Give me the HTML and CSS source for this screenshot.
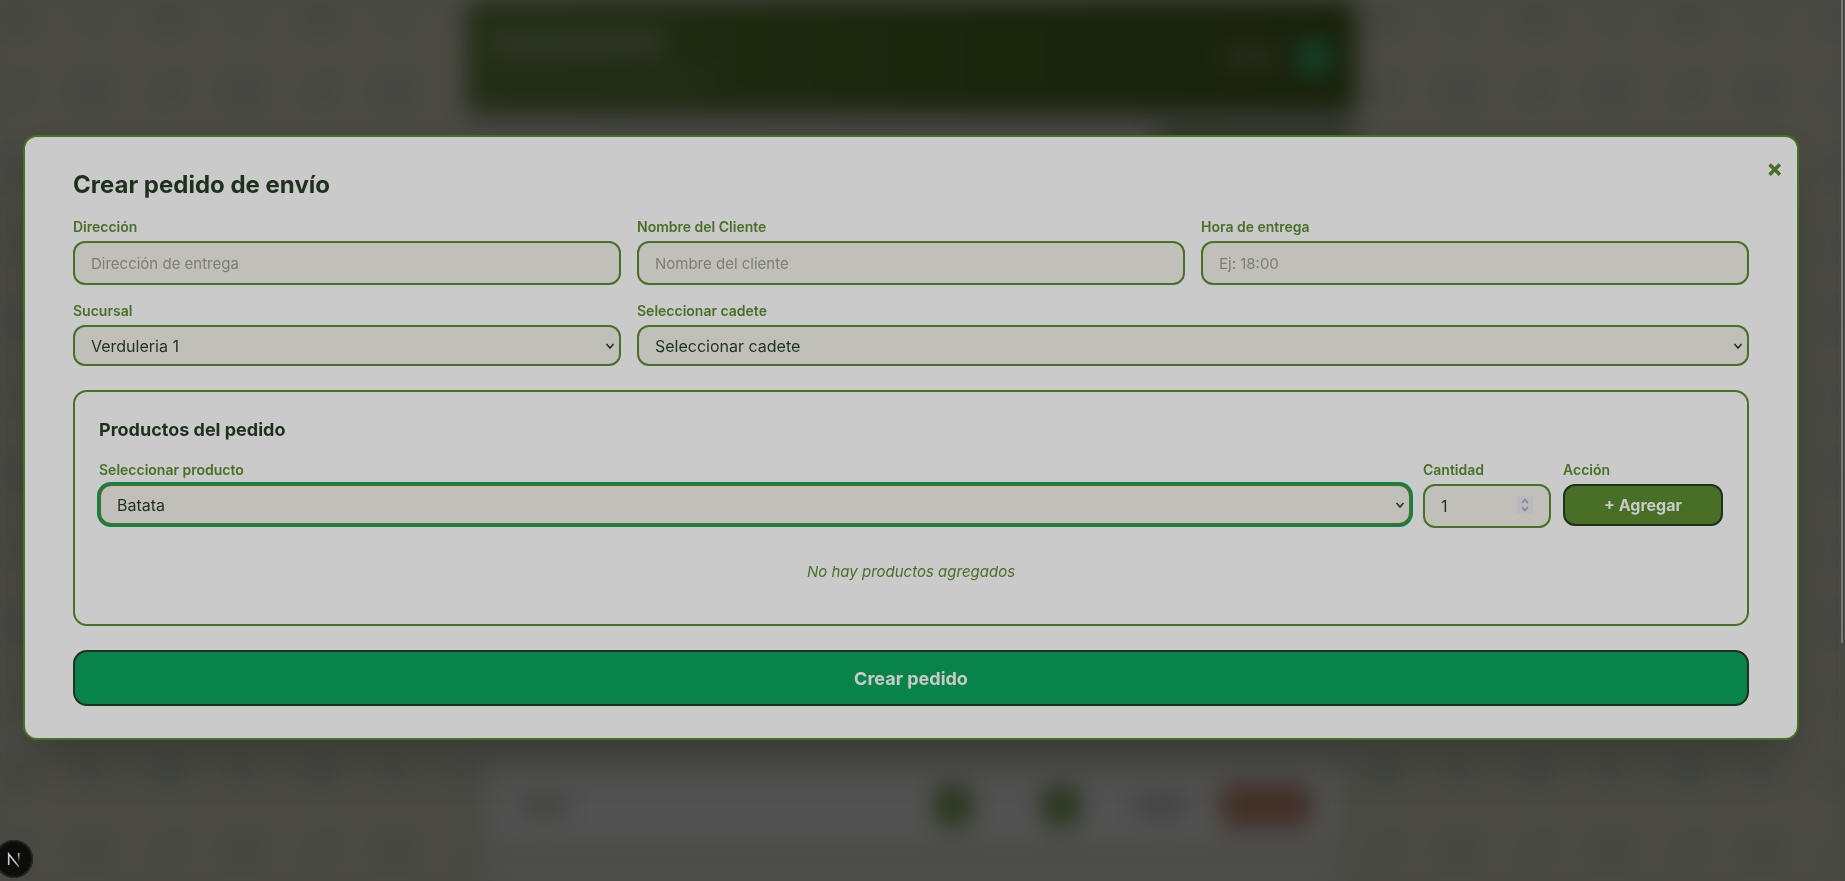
FILE: index.html
```html
<!DOCTYPE html>
<html lang="es">
<head>
<meta charset="utf-8">
<meta name="viewport" content="width=device-width, initial-scale=1">
<title>Crear pedido de envío</title>
<link rel="stylesheet" href="styles.css">
</head>
<body>
<div class="page" aria-hidden="true">
  <svg class="pattern" width="100%" height="100%">
    <defs>
      <pattern id="veggies" width="152" height="152" patternUnits="userSpaceOnUse">
        <g fill="#42453f">
          <circle cx="16" cy="16" r="18"/>
          <circle cx="91" cy="92" r="18"/>
          <ellipse cx="91" cy="15" rx="20" ry="8" transform="rotate(45 91 15)"/>
          <ellipse cx="17" cy="91" rx="20" ry="8" transform="rotate(-45 17 91)"/>
        </g>
      </pattern>
    </defs>
    <rect width="100%" height="100%" fill="url(#veggies)"/>
  </svg>
  <div class="column">
    <div class="hero">
      <div class="hero-copy">
        <div class="bar bar-title"></div>
        <div class="bar bar-sub"></div>
      </div>
      <div class="hero-user">
        <div class="bar bar-user"></div>
        <div class="avatar"></div>
      </div>
    </div>
    <div class="toolbar"><div class="tool"></div></div>
    <div class="rows">
      <div class="row">
        <div class="bar bar-name"></div>
        <div class="step"></div>
        <div class="step"></div>
        <div class="bar bar-price"></div>
        <div class="remove"></div>
      </div>
      <div class="row">
        <div class="bar bar-name"></div>
        <div class="step"></div>
        <div class="step"></div>
        <div class="bar bar-price"></div>
        <div class="remove"></div>
      </div>
    </div>
  </div>
</div>

<main class="overlay">
  <section class="modal" role="dialog" aria-modal="true" aria-labelledby="modal-title">
    <button class="close" type="button" aria-label="Cerrar">×</button>
    <h2 class="modal-title" id="modal-title">Crear pedido de envío</h2>
    <form class="form">
      <div class="fields">
        <div class="field">
          <label class="label" for="direccion">Dirección</label>
          <input class="control" id="direccion" type="text" placeholder="Dirección de entrega">
        </div>
        <div class="field">
          <label class="label" for="cliente">Nombre del Cliente</label>
          <input class="control" id="cliente" type="text" placeholder="Nombre del cliente">
        </div>
        <div class="field">
          <label class="label" for="hora">Hora de entrega</label>
          <input class="control" id="hora" type="text" placeholder="Ej: 18:00">
        </div>
        <div class="field">
          <label class="label" for="sucursal">Sucursal</label>
          <select class="control select" id="sucursal"><option>Verduleria 1</option></select>
        </div>
        <div class="field field-wide">
          <label class="label" for="cadete">Seleccionar cadete</label>
          <select class="control select" id="cadete"><option>Seleccionar cadete</option></select>
        </div>
      </div>

      <div class="products">
        <h3 class="products-title">Productos del pedido</h3>
        <div class="product-row">
          <div class="field">
            <label class="label" for="producto">Seleccionar producto</label>
            <select class="control select is-focused" id="producto"><option>Batata</option></select>
          </div>
          <div class="field">
            <label class="label" for="cantidad">Cantidad</label>
            <input class="control quantity" id="cantidad" type="number" min="1" value="1">
          </div>
          <div class="field">
            <label class="label" for="agregar">Acción</label>
            <button class="add" id="agregar" type="button">+ Agregar</button>
          </div>
        </div>
        <p class="empty">No hay productos agregados</p>
      </div>

      <button class="submit" type="submit">Crear pedido</button>
    </form>
  </section>
</main>

<div class="scroll-thumb"></div>
<button class="dev-badge" type="button" aria-label="Next.js">
  <svg width="38" height="38" viewBox="0 0 38 38" fill="none">
    <defs>
      <linearGradient id="fade-a" x1="14" y1="14" x2="26" y2="27" gradientUnits="userSpaceOnUse"><stop offset="0.6" stop-color="#ccc"/><stop offset="1" stop-color="#ccc" stop-opacity="0.3"/></linearGradient>
      <linearGradient id="fade-b" x1="0" y1="13" x2="0" y2="22" gradientUnits="userSpaceOnUse"><stop stop-color="#ccc"/><stop offset="1" stop-color="#ccc" stop-opacity="0"/></linearGradient>
    </defs>
    <path d="M13.7 25V14L24 27" stroke="url(#fade-a)" stroke-width="1.6"/>
    <path d="M23.7 13V22" stroke="url(#fade-b)" stroke-width="1.6"/>
  </svg>
</button>
</body>
</html>
```
FILE: styles.css
```css
:root {
  --green: #477026;
  --emerald: #08844a;
  --ink: #1e311d;
  --paper: #cacaca;
  --field: #c1bfb9;
}

* { box-sizing: border-box; }

body {
  margin: 0;
  background: #4a4a43;
  color: var(--ink);
  font: 16px/24px Inter, "Liberation Sans", sans-serif;
}

h2, h3, p { margin: 0; }

/* Dimmed page behind the dialog */
.page {
  position: fixed;
  inset: 0;
  overflow: hidden;
  background: #4a4a43;
  filter: blur(12px);
}

.pattern {
  position: absolute;
  inset: 0;
}

.column {
  position: relative;
  display: flex;
  flex-direction: column;
  width: 888px;
  height: 100%;
  margin-left: calc(50% - 455px);
  background: #4a4a45;
}

.hero {
  display: flex;
  align-items: center;
  justify-content: space-between;
  flex: none;
  height: 113px;
  padding: 0 24px;
  border-radius: 12px;
  background: linear-gradient(90deg, #212e14, #1b260d 60%, #19220c);
  box-shadow: 0 8px 16px #3e3e3a;
}

.hero-copy { display: grid; gap: 16px; }
.hero-user { display: flex; align-items: center; gap: 20px; }
.bar { border-radius: 4px; }
.bar-title { width: 174px; height: 26px; background: #303627; }
.bar-sub { width: 230px; height: 14px; background: #232f18; }
.bar-user { width: 54px; height: 20px; background: #292e1e; }
.avatar { width: 36px; height: 36px; border-radius: 50%; background: #14422c; }

.toolbar { display: flex; justify-content: flex-end; padding-top: 12px; }
.tool { width: 200px; height: 48px; background: #2d3728; }

.rows {
  display: grid;
  gap: 24px;
  margin-top: auto;
  padding: 0 24px;
  margin-bottom: -60px;
}

.row {
  display: flex;
  align-items: center;
  height: 74px;
  padding: 0 20px 0 28px;
  border-radius: 8px;
  background: #525252;
}

.bar-name { width: 48px; height: 20px; margin-right: auto; background: #41413f; }
.step { width: 38px; height: 40px; margin-right: 70px; border-radius: 8px; background: #27361a; }
.step + .step { margin-right: 56px; }
.bar-price { width: 52px; height: 20px; margin-right: 32px; background: #3f3f3e; }
.remove { width: 92px; height: 44px; border-radius: 8px; background: #412f26; }

/* Dialog */
.overlay {
  position: relative;
  display: flex;
  align-items: center;
  min-height: 100vh;
  padding: 0 46px 6px 23px;
}

.modal {
  position: relative;
  width: 100%;
  padding: 32px 48px;
  border: 2px solid var(--green);
  border-radius: 14px;
  background: var(--paper);
  box-shadow: 0 25px 50px -12px rgba(0, 0, 0, 0.25);
}

.modal-title {
  margin-bottom: 16px;
  font-size: 24px;
  line-height: 32px;
  font-weight: 700;
}

.close {
  position: absolute;
  top: 18px;
  right: 14px;
  padding: 0;
  border: 0;
  background: none;
  color: var(--green);
  font: 800 24px/28px Inter, sans-serif;
}

.form { display: grid; gap: 24px; }

.fields {
  display: grid;
  grid-template-columns: repeat(3, 1fr);
  gap: 16px;
}

.field {
  display: flex;
  flex-direction: column;
  gap: 4px;
  min-width: 0;
}

.field-wide { grid-column: span 2; }

.label {
  color: var(--green);
  font-size: 14px;
  line-height: 20px;
  font-weight: 600;
}

.control {
  width: 100%;
  height: 44px;
  padding: 8px 16px;
  border: 2px solid var(--green);
  border-radius: 12px;
  outline: 0;
  background: var(--field);
  color: var(--ink);
  font: inherit;
}

.control::placeholder { color: #7b7e74; opacity: 1; font-size: 15px; }

.select {
  height: 41px;
  padding: 0 24px 0 16px;
  appearance: none;
  background: var(--field) url("data:image/svg+xml,%3Csvg xmlns='http://www.w3.org/2000/svg' width='10' height='8' fill='none'%3E%3Cpath d='M1.5 2L5 6L8.5 2' stroke='%231e311d' stroke-width='1.5'/%3E%3C/svg%3E") no-repeat right 4px center;
}

.is-focused { box-shadow: 0 0 0 2px var(--emerald); }

.quantity::-webkit-inner-spin-button {
  opacity: 1;
  appearance: none;
  width: 16px;
  height: 18px;
  background: #b9b9be url("data:image/svg+xml,%3Csvg xmlns='http://www.w3.org/2000/svg' width='16' height='18' fill='none'%3E%3Cpath d='M5 7L8 3.500L11 7M5 11L8 14.500L11 11' stroke='%2382828a' stroke-width='1.5'/%3E%3C/svg%3E") no-repeat center;
}

.products {
  padding: 24px;
  border: 2px solid var(--green);
  border-radius: 14px;
}

.products-title {
  margin-bottom: 16px;
  font-size: 18px;
  line-height: 28px;
  font-weight: 700;
}

.product-row {
  display: grid;
  grid-template-columns: 1fr 128px 160px;
  gap: 12px;
}

.empty {
  margin-top: 16px;
  padding: 16px 0;
  color: var(--green);
  font-size: 15px;
  font-style: italic;
  text-align: center;
}

.add,
.submit {
  border: 2px solid var(--ink);
  border-radius: 12px;
  color: var(--paper);
  font-family: inherit;
  font-weight: 700;
}

.add {
  height: 42px;
  background: var(--green);
  font-size: 16px;
}

.submit {
  height: 56px;
  border-radius: 14px;
  background: var(--emerald);
  font-size: 18px;
}

/* Floating chrome */
.scroll-thumb {
  position: fixed;
  top: 0;
  right: 2px;
  width: 2px;
  height: 73vh;
  background: #77777a;
}

.dev-badge {
  position: fixed;
  bottom: 3px;
  left: -5px;
  width: 38px;
  height: 38px;
  padding: 0;
  border: 0;
  border-radius: 50%;
  background: #0c0c0b;
  box-shadow: inset 0 0 0 1px #292928, inset 0 0 0 2px #1b1b1a;
}
```
